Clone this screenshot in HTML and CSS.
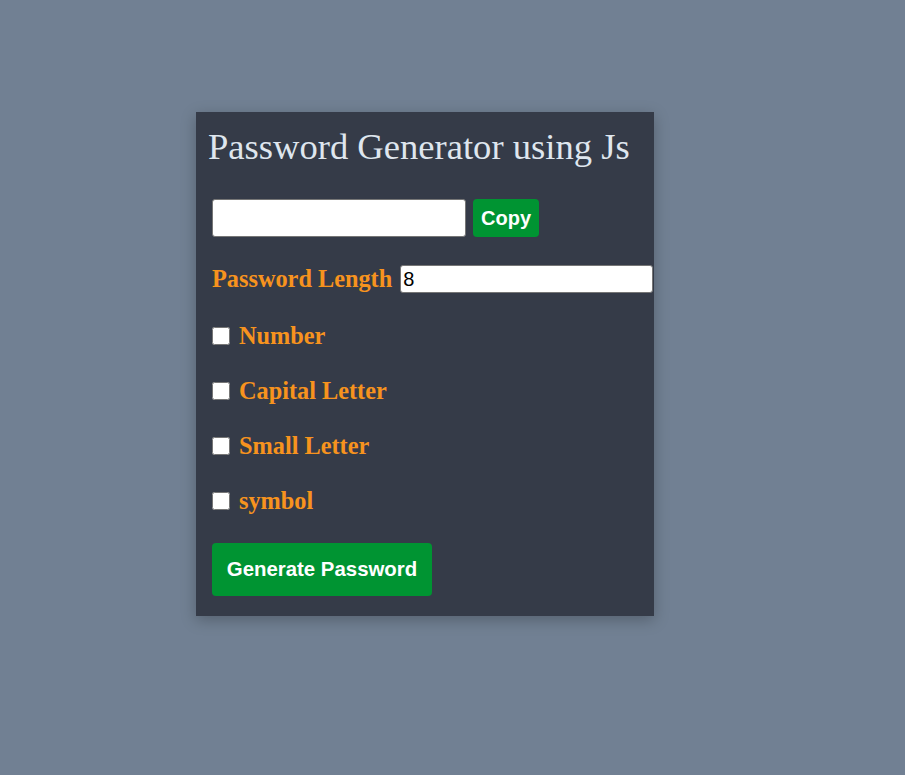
FILE: index.html
```html
<!DOCTYPE html>
<html>
<head>
<meta charset="utf-8">
<title>Password Generator</title>
<link rel="stylesheet" href="styles.css">
</head>
<body>
<div class="card">
  <h1 class="title">Password Generator using Js</h1>
  <div class="row copy-row">
    <input type="text" class="pass-out">
    <button class="btn btn-copy">Copy</button>
  </div>
  <div class="row len-row">
    <label class="lbl">Password Length</label>
    <input type="text" class="len-input" value="8">
  </div>
  <div class="row check-row">
    <input type="checkbox" class="chk"><label class="lbl">Number</label>
  </div>
  <div class="row check-row">
    <input type="checkbox" class="chk"><label class="lbl">Capital Letter</label>
  </div>
  <div class="row check-row">
    <input type="checkbox" class="chk"><label class="lbl">Small Letter</label>
  </div>
  <div class="row check-row">
    <input type="checkbox" class="chk"><label class="lbl">symbol</label>
  </div>
  <div class="row gen-row">
    <button class="btn btn-gen">Generate Password</button>
  </div>
</div>
</body>
</html>
```
FILE: styles.css
```css
html, body {
  margin: 0;
  padding: 0;
}
body {
  background: #718093;
  height: 775px;
  font-family: "Liberation Serif", "Times New Roman", serif;
}
.card {
  margin: 112px 0 0 196px;
  width: 458px;
  height: 504px;
  box-sizing: border-box;
  background: #353b48;
  box-shadow: 0 4px 14px rgba(0,0,0,0.25);
  padding: 15px 0 0 16px;
}
.title {
  margin: 0 0 0 -4px;
  font-weight: normal;
  font-size: 36.6px;
  line-height: 40px;
  height: 41px;
  color: #dfe6ee;
}
.row {
  display: flex;
  align-items: center;
}
.copy-row {
  margin-top: 31px;
  gap: 7px;
}
.pass-out {
  width: 254px;
  height: 38px;
  box-sizing: border-box;
  border: 1px solid #767676;
  border-radius: 3px;
  background: #fff;
  margin: 0;
}
.btn {
  border: none;
  background: #009432;
  color: #fff;
  font-family: "Liberation Sans", Arial, sans-serif;
  font-weight: bold;
  border-radius: 4px;
  margin: 0;
}
.btn-copy {
  width: 66px;
  height: 38px;
  font-size: 20px;
  padding: 0;
}
.len-row {
  margin-top: 28px;
  gap: 8px;
}
.lbl {
  color: #f7931e;
  font-weight: bold;
  font-size: 24.3px;
}
.len-input {
  width: 253px;
  height: 28px;
  box-sizing: border-box;
  border: 1px solid #767676;
  border-radius: 3px;
  font-family: "Liberation Sans", Arial, sans-serif;
  font-size: 20px;
  padding: 0 2px;
  margin: 0;
  color: #000;
}
.check-row {
  margin-top: 32px;
  gap: 9px;
  height: 22px;
}
.check-row + .check-row {
  margin-top: 33px;
}
.chk {
  width: 18px;
  height: 18px;
  margin: 0;
}
.gen-row {
  margin-top: 31px;
}
.btn-gen {
  width: 220px;
  height: 53px;
  font-size: 20.4px;
  padding: 0;
}
```
